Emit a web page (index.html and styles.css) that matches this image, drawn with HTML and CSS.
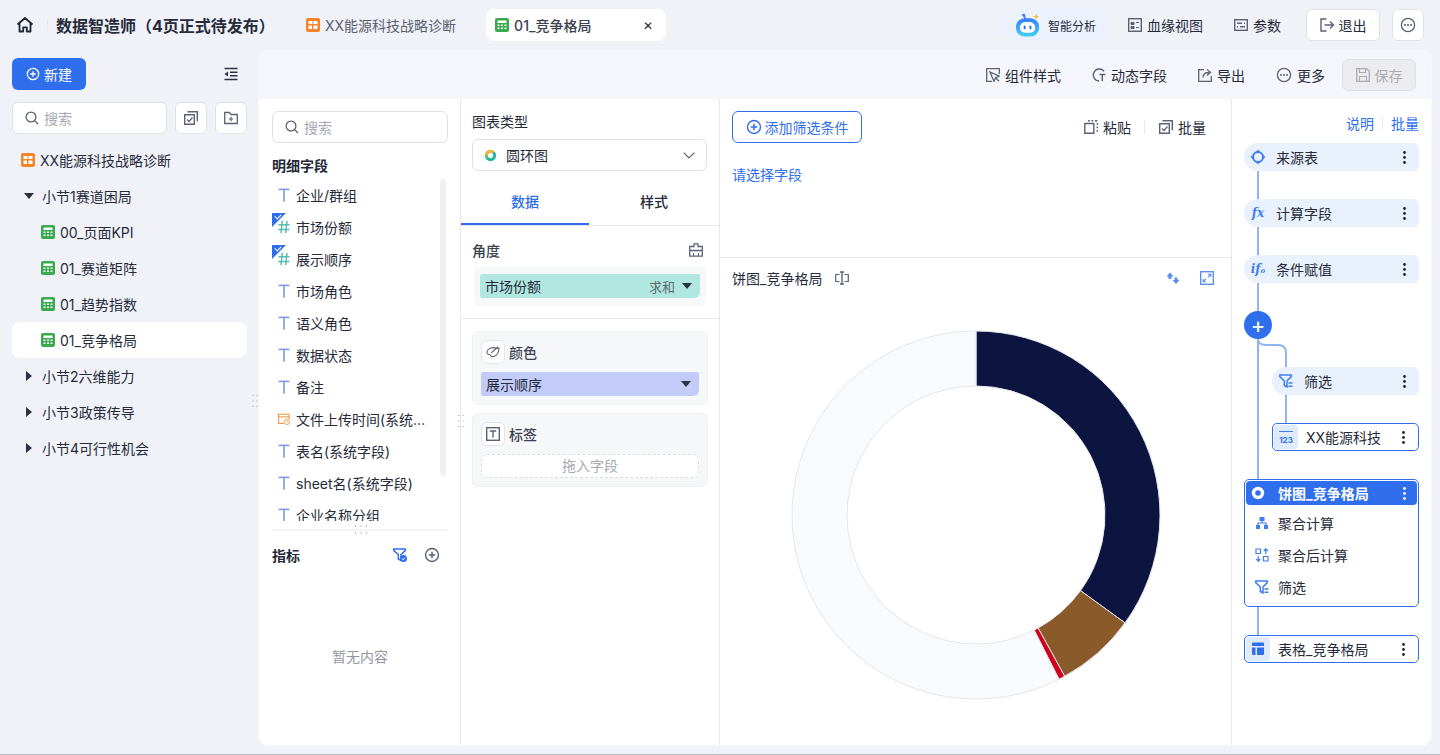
FILE: index.html
```html
<!DOCTYPE html>
<html lang="zh-CN">
<head>
  <meta charset="UTF-8" />
  <title>数据智造师</title>
  <link rel="stylesheet" href="styles.css">
</head>
<body>
  <!-- icon sprite -->
  <svg class="sprite" xmlns="http://www.w3.org/2000/svg">
    <symbol id="i-home" viewBox="0 0 18 18"><path d="M1.5 8.5 9 2l7.5 6.5M3.5 7v8.5h3.7v-4.2h3.6v4.2h3.700V7" fill="none" stroke="currentColor" stroke-width="1.8" stroke-linejoin="round"/></symbol>
    <symbol id="i-dash" viewBox="0 0 14 14"><rect width="14" height="14" rx="2" fill="#f5842a"/><path d="M2.500 3h9v3h-9zM2.500 7.500H6V11H2.500zM7.500 7.500h4V11h-4z" fill="#fff"/><path d="M7 3v3" stroke="#f5842a"/></symbol>
    <symbol id="i-table" viewBox="0 0 14 14"><rect width="14" height="14" rx="2" fill="#3aa94f"/><path d="M2.500 2.500h9v2.500h-9z" fill="#fff"/><path d="M2.500 6.500h2v1.500h-2zM6 6.500h2v1.500H6zM9.500 6.500h2v1.500h-2zM2.500 9.500h2V11h-2zM6 9.500h2V11H6zM9.500 9.500h2V11h-2z" fill="#fff"/></symbol>
    <symbol id="i-plus-circle" viewBox="0 0 16 16"><circle cx="8" cy="8" r="6.500" fill="none" stroke="currentColor" stroke-width="1.400"/><path d="M8 4.800v6.400M4.800 8h6.400" stroke="currentColor" stroke-width="1.500"/></symbol>
    <symbol id="i-outdent" viewBox="0 0 14 14"><path d="M.5 1.500h13M6 5.300h7.500M6 8.700h7.500M.5 12.500h13" stroke="currentColor" stroke-width="1.500"/><path d="M4 4.500v5L.5 7z" fill="currentColor"/></symbol>
    <symbol id="i-search" viewBox="0 0 14 14"><circle cx="6" cy="6" r="4.900" fill="none" stroke="currentColor" stroke-width="1.300"/><path d="m9.600 9.600 3.400 3.400" stroke="currentColor" stroke-width="1.300"/></symbol>
    <symbol id="i-batch" viewBox="0 0 14 14"><path d="M.7 3.700h9.600v9.600H.7z" fill="none" stroke="currentColor" stroke-width="1.400"/><path d="M3.500.7h9.800v9.600" fill="none" stroke="currentColor" stroke-width="1.400"/><path d="m3 8.500 2 2 3.500-4" fill="none" stroke="currentColor" stroke-width="1.200"/></symbol>
    <symbol id="i-folder-plus" viewBox="0 0 14 14"><path d="M.7 1.500h4.800l1.500 2h6.300v9H.7z" fill="none" stroke="currentColor" stroke-width="1.300"/><path d="M7 5.800v4.400M4.800 8h4.400" stroke="currentColor" stroke-width="1.200"/></symbol>
    <symbol id="i-t" viewBox="0 0 12 14"><path d="M.5 1.300h11M6 1.300V13.500" fill="none" stroke="currentColor" stroke-width="1.800"/></symbol>
    <symbol id="i-hash" viewBox="0 0 12 14"><path d="M4.300 1 3 13M9 1 7.700 13M.5 4.800h11M.3 9.500h11" fill="none" stroke="currentColor" stroke-width="1.500"/></symbol>
    <symbol id="i-cal" viewBox="0 0 14 14"><path d="M13 7V1.500H.7v10.800H7" fill="none" stroke="currentColor" stroke-width="1.200"/><path d="M.7 4.500H13" stroke="currentColor" stroke-width="1.200"/><circle cx="10.500" cy="10.500" r="3" fill="#fff" stroke="currentColor"/><path d="M10.500 9v1.700h1.300" fill="none" stroke="currentColor" stroke-width=".8"/></symbol>
    <symbol id="i-funnel" viewBox="0 0 14 14"><path d="M.8 1h11.400v1.600L8 7v6L5.300 11.500V7L.8 2.600z" fill="none" stroke="currentColor" stroke-width="1.500"/><path d="M9.500 9h4M9.500 12.200h4" stroke="currentColor" stroke-width="1.500"/></symbol>
    <symbol id="i-more" viewBox="0 0 3 13"><circle cx="1.500" cy="1.500" r="1.400" fill="currentColor"/><circle cx="1.500" cy="6.500" r="1.400" fill="currentColor"/><circle cx="1.500" cy="11.500" r="1.400" fill="currentColor"/></symbol>
    <symbol id="i-dots-circle" viewBox="0 0 16 16"><circle cx="8" cy="8" r="6.600" fill="none" stroke="currentColor" stroke-width="1.300"/><circle cx="5" cy="8" r="1" fill="currentColor"/><circle cx="8" cy="8" r="1" fill="currentColor"/><circle cx="11" cy="8" r="1" fill="currentColor"/></symbol>
    <symbol id="i-panel" viewBox="0 0 14 14"><rect x=".7" y=".7" width="12.600" height="12.600" fill="none" stroke="currentColor" stroke-width="1.400"/><path d="M3 4.500h3v2H3zM3 8.500h3v2H3zM8 4.500h3M8 9.500h3" fill="currentColor" stroke="currentColor"/></symbol>
    <symbol id="i-param" viewBox="0 0 14 14"><rect x=".7" y="1.700" width="12.600" height="10.600" fill="none" stroke="currentColor" stroke-width="1.400"/><path d="M3 5.200h5M10 5.200h1M3 8.800h1M6 8.800h5" stroke="currentColor" stroke-width="1.400"/></symbol>
    <symbol id="i-exit" viewBox="0 0 14 14"><path d="M6.500 1H1v12h5.500" fill="none" stroke="currentColor" stroke-width="1.400"/><path d="M4.500 7h9M10 3.500 13.500 7 10 10.500" fill="none" stroke="currentColor" stroke-width="1.400"/></symbol>
    <symbol id="i-style" viewBox="0 0 14 14"><path d="M13.300 6V.7H.7v12.600H6" fill="none" stroke="currentColor" stroke-width="1.300"/><path d="m4 4 4 9.500 1.500-3.800L13.300 8.200z" fill="none" stroke="currentColor" stroke-width="1.300"/><path d="m9.500 9.700 3.500 3.500" stroke="currentColor" stroke-width="1.300"/></symbol>
    <symbol id="i-dynamic" viewBox="0 0 14 14"><path d="M12 3.200A6 6 0 1 0 7 13" fill="none" stroke="currentColor" stroke-width="1.400"/><path d="M7.500 6.500h5.800M10.300 6.500V13" fill="none" stroke="currentColor" stroke-width="1.400"/></symbol>
    <symbol id="i-export" viewBox="0 0 14 14"><path d="M6 1.700H.7v11.600h12.600V8" fill="none" stroke="currentColor" stroke-width="1.300"/><path d="M5 9.500C5 6 7 4.500 11 4.500M9 1.500l3.500 3L9 7.500" fill="none" stroke="currentColor" stroke-width="1.300"/></symbol>
    <symbol id="i-save" viewBox="0 0 14 14"><path d="M.7.7h10l2.600 2.600v10H.7z" fill="none" stroke="currentColor" stroke-width="1.300"/><path d="M3.500 1v3.500h6V1M3.500 13V8.500h7V13" fill="none" stroke="currentColor" stroke-width="1.100"/></symbol>
    <symbol id="i-paste" viewBox="0 0 14 14"><path d="M.8 3.500h9v9.800h-9z" fill="none" stroke="currentColor" stroke-width="1.400"/><path d="M4 .8h1.800M7.500.8h1.800M11 .8h2.300M13.300 3v1.800M13.300 6.500v1.800M13.300 10v1.800" stroke="currentColor" stroke-width="1.400"/></symbol>
    <symbol id="i-cursor" viewBox="0 0 14 14"><path d="M5 1h4M5 13h4M7 1v12" stroke="currentColor" stroke-width="1.400"/><path d="M4.500 3.500H.7v7h3.800M9.500 3.500h3.800v7H9.500" fill="none" stroke="currentColor" stroke-width="1.200"/></symbol>
    <symbol id="i-swap" viewBox="0 0 14 14"><path d="M4 1 7.500 5h-2v2.500h-3V5h-2z" transform="translate(0 .5)" fill="currentColor"/><path d="M10 13 6.500 9h2V6.500h3V9h2z" fill="currentColor"/></symbol>
    <symbol id="i-expand" viewBox="0 0 14 14"><rect x=".7" y=".7" width="12.600" height="12.600" fill="none" stroke="currentColor" stroke-width="1.400"/><path d="M8 3.300h2.800v2.800M10.800 3.300 7.800 6.300M6 10.700H3.200V7.900M3.200 10.700l3-3" fill="none" stroke="currentColor" stroke-width="1.100"/></symbol>
    <symbol id="i-brush" viewBox="0 0 14 14"><path d="M5 3.500V.8h4v2.700h4.300v9.700H.7V3.500zM.7 7.500h12.600" fill="none" stroke="currentColor" stroke-width="1.300"/><path d="M4.500 13V10M9.500 13V10" stroke="currentColor" stroke-width="1"/></symbol>
    <symbol id="i-palette" viewBox="0 0 16 14"><path d="M8.500 2C4 2 1 4.500 1 7.500c0 2.500 2.500 2 3.500 2.500s.5 2.500 3 2.500c3.500 0 6-3 6.500-5.500l1-4z" fill="none" stroke="currentColor" stroke-width="1.200"/><path d="m6 8 8-7" stroke="currentColor" stroke-width="1.400"/></symbol>
    <symbol id="i-tbox" viewBox="0 0 14 14"><rect x=".7" y=".7" width="12.600" height="12.600" fill="none" stroke="currentColor" stroke-width="1.400"/><path d="M3.800 4h6.400M7 4v6.500" fill="none" stroke="currentColor" stroke-width="1.400"/></symbol>
    <symbol id="i-source" viewBox="0 0 16 16"><circle cx="8" cy="8" r="5" fill="none" stroke="currentColor" stroke-width="2"/><path d="M8 .5 10 3H6zM8 15.500 6 13h4zM.5 8 3 6v4zM15.500 8 13 10V6z" fill="currentColor"/></symbol>
    <symbol id="i-agg" viewBox="0 0 14 14"><path d="M4.500 1h5v4h-5zM1 9h4v4H1zM9 9h4v4H9z" fill="currentColor"/><path d="M7 5v2M3 9V7h8v2" fill="none" stroke="currentColor" stroke-width="1.200"/></symbol>
    <symbol id="i-after" viewBox="0 0 14 14"><path d="M1 1h4.500v4.500H1zM8.500 8.500H13V13H8.500z" fill="none" stroke="currentColor" stroke-width="1.200"/><path d="M3.300 8v5M1.300 11l2 2.200 2-2.200M10.800 6V1M8.800 3l2-2.200 2 2.200" fill="none" stroke="currentColor" stroke-width="1.200"/></symbol>
    <symbol id="i-grid" viewBox="0 0 14 14"><path d="M1 1.500a1 1 0 0 1 1-1h10a1 1 0 0 1 1 1V4H1zM1 5.500h3.500V13H2a1 1 0 0 1-1-1zM6 5.500h7V12a1 1 0 0 1-1 1H6z" fill="currentColor"/></symbol>
    <symbol id="i-ring" viewBox="0 0 14 14"><circle cx="7" cy="7" r="4.500" fill="none" stroke="currentColor" stroke-width="3.400"/></symbol>
    <symbol id="i-grip" viewBox="0 0 6 14"><path d="M1 1v1M5 1v1M1 6.500v1M5 6.500v1M1 12v1M5 12v1" stroke="currentColor" stroke-width="1.300"/></symbol>
    <symbol id="i-grip-h" viewBox="0 0 14 9"><path d="M1 1h1M6.500 1h1M12 1h1M1 8h1M6.500 8h1M12 8h1" stroke="currentColor" stroke-width="1.300"/></symbol>
  </svg>

  <div class="app">
    <header class="topbar">
      <svg class="icon-home"><use href="#i-home"/></svg>
      <span class="top-sep"></span>
      <h1 class="app-title">数据智造师（4页正式待发布）</h1>
      <div class="tab">
        <svg class="ic14"><use href="#i-dash"/></svg>
        <span>XX能源科技战略诊断</span>
      </div>
      <div class="tab tab-on">
        <svg class="ic14"><use href="#i-table"/></svg>
        <span>01_竞争格局</span>
        <span class="tab-close">✕</span>
      </div>

      <div class="top-right">
        <div class="ai-pill">
          <svg class="ai-bot" viewBox="0 0 28 26">
            <defs>
              <linearGradient id="botFill" x1="0" y1="0" x2="0" y2="1">
                <stop offset="0" stop-color="#3a7cf5"/>
                <stop offset="1" stop-color="#3fd0f7"/>
              </linearGradient>
            </defs>
            <path d="m11 7-2-4" stroke="#3a7cf5" stroke-width="1.600"/>
            <circle cx="9" cy="2.800" r="1.500" fill="#3a7cf5"/>
            <path d="m22 1 .9 2.300 2.300.9-2.300.9-.9 2.300-.9-2.300-2.300-.9 2.300-.9z" fill="#f9b93c"/>
            <rect x="1" y="6" width="24" height="19" rx="9" fill="url(#botFill)"/>
            <rect x="5" y="10" width="16" height="11" rx="5.500" fill="#fff"/>
            <rect x="9" y="13.500" width="2" height="4" rx="1" fill="#2a6fe8"/>
            <rect x="15" y="13.500" width="2" height="4" rx="1" fill="#2a6fe8"/>
          </svg>
          <span>智能分析</span>
        </div>
        <a class="top-link lineage"><svg class="ic14"><use href="#i-panel"/></svg>血缘视图</a>
        <a class="top-link params"><svg class="ic14"><use href="#i-param"/></svg>参数</a>
        <button class="btn-white btn-exit"><svg class="ic14"><use href="#i-exit"/></svg>退出</button>
        <button class="btn-white btn-square"><svg class="ic16"><use href="#i-dots-circle"/></svg></button>
      </div>
    </header>

    <div class="content">
      <aside class="sidebar">
        <div class="side-head">
          <button class="btn-new"><svg class="ic14"><use href="#i-plus-circle"/></svg>新建</button>
          <svg class="ic14 outdent"><use href="#i-outdent"/></svg>
        </div>
        <div class="side-search">
          <div class="search-box">
            <svg class="ic14"><use href="#i-search"/></svg>
            <span>搜索</span>
          </div>
          <button class="btn-white btn-square"><svg class="ic14"><use href="#i-batch"/></svg></button>
          <button class="btn-white btn-square"><svg class="ic14"><use href="#i-folder-plus"/></svg></button>
        </div>
        <ul class="tree">
          <li class="tree-row root"><svg class="ic14"><use href="#i-dash"/></svg>XX能源科技战略诊断</li>
          <li class="tree-row"><i class="caret caret-down"></i>小节1赛道困局</li>
          <li class="tree-row leaf"><svg class="ic14"><use href="#i-table"/></svg>00_页面KPI</li>
          <li class="tree-row leaf"><svg class="ic14"><use href="#i-table"/></svg>01_赛道矩阵</li>
          <li class="tree-row leaf"><svg class="ic14"><use href="#i-table"/></svg>01_趋势指数</li>
          <li class="tree-row leaf active"><svg class="ic14"><use href="#i-table"/></svg>01_竞争格局</li>
          <li class="tree-row"><i class="caret caret-right"></i>小节2六维能力</li>
          <li class="tree-row"><i class="caret caret-right"></i>小节3政策传导</li>
          <li class="tree-row"><i class="caret caret-right"></i>小节4可行性机会</li>
        </ul>
        <svg class="grip grip-side"><use href="#i-grip"/></svg>
      </aside>

      <main class="main">
        <div class="toolbar">
          <a class="tool"><svg class="ic14"><use href="#i-style"/></svg>组件样式</a>
          <a class="tool"><svg class="ic14"><use href="#i-dynamic"/></svg>动态字段</a>
          <a class="tool"><svg class="ic14"><use href="#i-export"/></svg>导出</a>
          <a class="tool"><svg class="ic16"><use href="#i-dots-circle"/></svg>更多</a>
          <button class="btn-save"><svg class="ic14"><use href="#i-save"/></svg>保存</button>
        </div>

        <div class="columns">
          <section class="col-fields">
            <div class="search-box">
              <svg class="ic14"><use href="#i-search"/></svg>
              <span>搜索</span>
            </div>
            <h3 class="fields-title">明细字段</h3>
            <div class="field-list">
              <div class="field"><svg class="field-ic c-t"><use href="#i-t"/></svg><span>企业/群组</span></div>
              <div class="field"><i class="checked"></i><svg class="field-ic c-hash"><use href="#i-hash"/></svg><span>市场份额</span></div>
              <div class="field"><i class="checked"></i><svg class="field-ic c-hash"><use href="#i-hash"/></svg><span>展示顺序</span></div>
              <div class="field"><svg class="field-ic c-t"><use href="#i-t"/></svg><span>市场角色</span></div>
              <div class="field"><svg class="field-ic c-t"><use href="#i-t"/></svg><span>语义角色</span></div>
              <div class="field"><svg class="field-ic c-t"><use href="#i-t"/></svg><span>数据状态</span></div>
              <div class="field"><svg class="field-ic c-t"><use href="#i-t"/></svg><span>备注</span></div>
              <div class="field"><svg class="field-ic cal"><use href="#i-cal"/></svg><span>文件上传时间(系统字段)</span></div>
              <div class="field"><svg class="field-ic c-t"><use href="#i-t"/></svg><span>表名(系统字段)</span></div>
              <div class="field"><svg class="field-ic c-t"><use href="#i-t"/></svg><span>sheet名(系统字段)</span></div>
              <div class="field"><svg class="field-ic c-t"><use href="#i-t"/></svg><span>企业名称分组</span></div>
              <i class="scroll-thumb"></i>
            </div>
            <div class="split">
              <svg class="grip-h"><use href="#i-grip-h"/></svg>
            </div>
            <div class="metric-head">
              <h3>指标</h3>
              <svg class="ic14 funnel-check" viewBox="0 0 14 14">
                <path d="M.8 1h11.400v1.600L8 6.500v6L5.300 11V6.500L.8 2.600z" fill="none" stroke="currentColor" stroke-width="1.500"/>
                <circle cx="10.500" cy="10.500" r="3.500" fill="currentColor"/>
                <path d="m8.800 10.500 1.300 1.300 2-2.300" fill="none" stroke="#fff"/>
              </svg>
              <svg class="ic16"><use href="#i-plus-circle"/></svg>
            </div>
            <div class="metric-empty">暂无内容</div>
          </section>

          <section class="col-config">
            <div class="chart-type">
              <label>图表类型</label>
              <div class="select">
                <svg class="ring-ic" viewBox="0 0 14 14">
                  <circle cx="7" cy="7" r="4.500" fill="none" stroke="#17b4a0" stroke-width="3"/>
                  <path d="M2.500 7A4.500 4.500 0 0 1 10.200 3.800" fill="none" stroke="#f7b23b" stroke-width="3"/>
                  <path d="M2.500 7a4.500 4.500 0 0 0 1.300 3.200" fill="none" stroke="#5cc76b" stroke-width="3"/>
                </svg>
                <span>圆环图</span>
                <svg class="chev" viewBox="0 0 12 7"><path d="m.7.700 5.300 5.300L11.300.7" fill="none" stroke="currentColor" stroke-width="1.200"/></svg>
              </div>
            </div>
            <div class="tabs">
              <div class="cfg-tab cfg-tab-on">数据</div>
              <div class="cfg-tab">样式</div>
            </div>
            <div class="angle">
              <div class="angle-head">
                <b>角度</b>
                <svg class="ic14"><use href="#i-brush"/></svg>
              </div>
              <div class="angle-box">
                <div class="pill pill-green">
                  <span>市场份额</span>
                  <em>求和</em>
                  <i class="caret caret-down"></i>
                </div>
              </div>
            </div>
            <div class="cards">
              <div class="card">
                <div class="card-head">
                  <span class="card-ic"><svg class="ic14"><use href="#i-palette"/></svg></span>
                  <b>颜色</b>
                </div>
                <div class="pill pill-violet">
                  <span>展示顺序</span>
                  <i class="caret caret-down"></i>
                </div>
              </div>
              <div class="card">
                <div class="card-head">
                  <span class="card-ic"><svg class="ic14"><use href="#i-tbox"/></svg></span>
                  <b>标签</b>
                </div>
                <div class="drop">拖入字段</div>
              </div>
              <svg class="grip grip-cfg"><use href="#i-grip"/></svg>
            </div>
          </section>

          <section class="col-chart">
            <div class="filter-pane">
              <div class="filter-row">
                <button class="btn-add"><svg class="ic16"><use href="#i-plus-circle"/></svg>添加筛选条件</button>
                <div class="filter-tools">
                  <a class="tool"><svg class="ic14"><use href="#i-paste"/></svg>粘贴</a>
                  <span class="vsep"></span>
                  <a class="tool"><svg class="ic14"><use href="#i-batch"/></svg>批量</a>
                </div>
              </div>
              <p class="filter-hint">请选择字段</p>
            </div>
            <div class="chart-head">
              <span>饼图_竞争格局</span>
              <svg class="ic14 cursor"><use href="#i-cursor"/></svg>
              <svg class="ic14 swap"><use href="#i-swap"/></svg>
              <svg class="ic14 expand"><use href="#i-expand"/></svg>
            </div>
            <div class="chart-body">
              <svg class="donut" viewBox="0 0 370 370">
                <path class="slice" fill="#0c1440" d="M185 1A184 184 0 0 1 334.040 292.900L289.490 260.650A129 129 0 0 0 185 56Z"/>
                <path class="slice" fill="#8b5a2b" d="M334.040 292.900A184 184 0 0 1 273.650 346.240L247.150 298.040A129 129 0 0 0 289.490 260.650Z"/>
                <path class="slice" fill="#d0021b" d="M273.650 346.240A184 184 0 0 1 267.970 349.240L243.170 300.150A129 129 0 0 0 247.150 298.040Z"/>
                <path class="slice" fill="#f9fafe" d="M267.970 349.240A184 184 0 1 1 185 1L185 56A129 129 0 1 0 243.170 300.150Z"/>
              </svg>
            </div>
          </section>

          <section class="col-flow">
            <div class="flow-links">
              <a>说明</a>
              <span class="vsep"></span>
              <a>批量</a>
            </div>
            <div class="flow">
              <svg class="wires" viewBox="0 0 175 520">
                <path d="M14 28V336M14 464V492M14 196Q14 202 22 202H34Q42 202 42 210V224M42 252V280" fill="none" stroke="#8fb4f5" stroke-width="2"/>
              </svg>
              <div class="node"><svg class="ic16"><use href="#i-source"/></svg><span>来源表</span><svg class="more"><use href="#i-more"/></svg></div>
              <div class="node"><em class="fx">fx</em><span>计算字段</span><svg class="more"><use href="#i-more"/></svg></div>
              <div class="node"><em class="fx">if<small>o</small></em><span>条件赋值</span><svg class="more"><use href="#i-more"/></svg></div>
              <div class="add-row"><button class="btn-round">+</button></div>
              <div class="node node-sub"><svg class="ic14 node-ic"><use href="#i-funnel"/></svg><span>筛选</span><svg class="more"><use href="#i-more"/></svg></div>
              <div class="node-box node-sub">
                <span class="box-ic num">123</span>
                <span>XX能源科技</span>
                <svg class="more"><use href="#i-more"/></svg>
              </div>
              <div class="pie-card">
                <div class="pie-head">
                  <span class="pie-ic"><svg class="ic14"><use href="#i-ring"/></svg></span>
                  <b>饼图_竞争格局</b>
                  <svg class="more"><use href="#i-more"/></svg>
                </div>
                <div class="pie-row"><svg class="ic14"><use href="#i-agg"/></svg>聚合计算</div>
                <div class="pie-row"><svg class="ic14"><use href="#i-after"/></svg>聚合后计算</div>
                <div class="pie-row"><svg class="ic14"><use href="#i-funnel"/></svg>筛选</div>
              </div>
              <div class="node-box">
                <span class="box-ic"><svg class="ic14"><use href="#i-grid"/></svg></span>
                <span>表格_竞争格局</span>
                <svg class="more"><use href="#i-more"/></svg>
              </div>
            </div>
          </section>
        </div>
      </main>
    </div>
  </div>
</body>
</html>
```

FILE: styles.css
```css
:root {
  --primary: #2f6fed;
  --text: #252b3a;
  --icon: #5b6273;
  --line: #e6e8ec;
  --node: #e9f1fd;
}

* {
  box-sizing: border-box;
}

html, body {
  margin: 0;
  height: 755px;
  overflow: hidden;
}

body {
  font-family: Inter, 'Noto Sans CJK SC', sans-serif;
  font-size: 14px;
  color: var(--text);
  background: #f0f2f8;
}

button {
  font: inherit;
  color: inherit;
  cursor: pointer;
}

h1, h3, p, ul {
  margin: 0;
  padding: 0;
}

svg {
  flex: none;
  display: block;
}

em {
  font-style: normal;
}

.sprite {
  position: absolute;
  width: 0;
  height: 0;
}

.ic14 { width: 14px; height: 14px; }
.ic16 { width: 16px; height: 16px; }

.app {
  height: 755px;
  border-bottom: 1px solid #b3b7bf;
}

/* top bar */
.topbar {
  height: 50px;
  display: flex;
  align-items: center;
  padding-left: 16px;
}

.icon-home {
  width: 18px;
  height: 18px;
  color: #1f2733;
}

.top-sep {
  width: 1px;
  height: 12px;
  margin: 0 8px 0 13px;
  background: #e6e8ee;
}

.app-title {
  width: 240px;
  font-size: 16px;
  font-weight: 700;
  white-space: nowrap;
}

.tab {
  display: flex;
  align-items: center;
  gap: 5px;
  color: #5a6070;
  margin-left: 10px;
  height: 32px;
}

.tab-on {
  width: 180px;
  margin-left: 30px;
  padding-left: 9px;
  background: #fff;
  border-radius: 8px;
  font-weight: 500;
  color: #3b4150;
}

.tab-close {
  margin-left: auto;
  margin-right: 13px;
  font-size: 12px;
  color: #1f2733;
}

.top-right {
  margin-left: auto;
  display: flex;
  align-items: center;
  padding-right: 16px;
}

.ai-pill {
  width: 110px;
  height: 32px;
  display: flex;
  align-items: center;
  gap: 6px;
  padding-left: 15px;
  font-size: 12px;
  background: #ebf2fd;
  border-radius: 16px;
  margin-right: 18px;
}

.ai-bot {
  width: 27px;
  height: 26px;
}

.top-link {
  display: flex;
  align-items: center;
  gap: 5px;
}

.top-link svg { color: var(--icon); }
.lineage { margin-right: 31px; }
.params { margin-right: 25px; }

.btn-white {
  height: 32px;
  display: flex;
  align-items: center;
  justify-content: center;
  gap: 5px;
  background: #fff;
  border: 1px solid #e0e3ea;
  border-radius: 6px;
}

.btn-white svg { color: var(--icon); }
.btn-exit { width: 74px; margin-right: 12px; }
.btn-square { width: 32px; padding: 0; }

/* layout */
.content {
  display: flex;
  height: 696px;
}

.sidebar {
  position: relative;
  width: 258px;
  flex: none;
  padding: 8px 11px 0 12px;
}

.side-head {
  display: flex;
  align-items: center;
  justify-content: space-between;
  padding-right: 9px;
}

.btn-new {
  width: 74px;
  height: 32px;
  display: flex;
  align-items: center;
  justify-content: center;
  gap: 4px;
  background: var(--primary);
  color: #fff;
  border: none;
  border-radius: 6px;
  font-size: 14px;
}

.outdent { color: #2b3240; }

.side-search {
  display: flex;
  gap: 8px;
  margin-top: 12px;
}

.side-search .search-box {
  width: 155px;
}

.search-box {
  height: 32px;
  display: flex;
  align-items: center;
  gap: 5px;
  padding-left: 12px;
  background: #fff;
  border: 1px solid #dfe2e9;
  border-radius: 6px;
  color: #a5a9b3;
}

.search-box svg { color: var(--icon); }

.tree {
  list-style: none;
  margin-top: 8px;
}

.tree-row {
  height: 36px;
  display: flex;
  align-items: center;
  gap: 8px;
  padding-left: 12px;
  border-radius: 8px;
}

.tree-row.root { gap: 5px; padding-left: 9px; }
.tree-row.leaf { gap: 5px; padding-left: 29px; }
.tree-row.active { background: #fff; }

.caret {
  display: block;
  flex: none;
  width: 0;
  height: 0;
}

.caret-down {
  border-left: 5px solid transparent;
  border-right: 5px solid transparent;
  border-top: 6px solid #2b3240;
}

.caret-right {
  border-top: 5px solid transparent;
  border-bottom: 5px solid transparent;
  border-left: 6px solid #2b3240;
  margin-left: 2px;
  margin-right: 2px;
}

.grip {
  position: absolute;
  width: 6px;
  height: 14px;
  color: #aeb2ba;
}

.grip-side { right: 0; top: 344px; }

.main {
  width: 1174px;
  flex: none;
  display: flex;
  flex-direction: column;
  background: #fff;
  border: 1px solid #f7f8fc;
  border-radius: 10px;
  overflow: hidden;
}

.toolbar {
  height: 48px;
  flex: none;
  display: flex;
  align-items: center;
  justify-content: flex-end;
  gap: 31px;
  padding-right: 15px;
  background: #f5f6fb;
}

.tool {
  display: flex;
  align-items: center;
  gap: 5px;
}

.tool svg { color: var(--icon); }

.btn-save {
  width: 74px;
  height: 32px;
  margin-left: -14px;
  display: flex;
  align-items: center;
  justify-content: center;
  gap: 5px;
  color: #a8acb5;
  background: #ececef;
  border: 1px solid #dfe1e6;
  border-radius: 6px;
}

.columns {
  flex: 1;
  display: flex;
  min-height: 0;
}

/* fields column */
.col-fields {
  width: 202px;
  flex: none;
  display: flex;
  flex-direction: column;
  padding: 12px 12px 0 13px;
  border-right: 1px solid var(--line);
}

.fields-title {
  height: 22px;
  line-height: 22px;
  margin-top: 12px;
  margin-bottom: 2px;
  font-size: 14px;
  font-weight: 700;
}

.field-list {
  position: relative;
  height: 342px;
  flex: none;
  overflow: hidden;
}

.field {
  position: relative;
  height: 32px;
  display: flex;
  align-items: center;
  gap: 6px;
  padding: 0 20px 0 6px;
}

.field span {
  overflow: hidden;
  white-space: nowrap;
  text-overflow: ellipsis;
}

.field-ic {
  width: 12px;
  height: 14px;
}

.c-t { color: #86a3e0; }
.c-hash { color: #55bfae; }
.cal { color: #f5923e; }

.checked {
  position: absolute;
  left: 0;
  top: 2px;
  width: 14px;
  height: 14px;
  background: var(--primary);
  clip-path: polygon(0 0, 100% 0, 0 100%);
}

.checked::after {
  content: "";
  position: absolute;
  left: 3px;
  top: 1px;
  width: 5px;
  height: 3px;
  border-left: 1px solid #fff;
  border-bottom: 1px solid #fff;
  transform: rotate(-45deg);
}

.scroll-thumb {
  position: absolute;
  right: 2px;
  top: 0;
  width: 6px;
  height: 297px;
  background: #eef0f3;
  border-radius: 3px;
}

.split {
  position: relative;
  height: 2px;
  flex: none;
  margin-top: 8px;
  background: #f2f3f5;
}

.grip-h {
  position: absolute;
  left: 82px;
  top: -4px;
  width: 14px;
  height: 9px;
  color: #a5a9b1;
}

.metric-head {
  display: flex;
  align-items: center;
  margin-top: 14px;
  height: 20px;
}

.metric-head h3 {
  flex: 1;
  font-size: 14px;
  font-weight: 700;
}

.funnel-check { color: var(--primary); margin-right: 17px; }
.metric-head .ic16 { color: var(--icon); margin-right: 8px; }

.metric-empty {
  margin-top: 81px;
  text-align: center;
  line-height: 22px;
  color: #93979f;
}

/* config column */
.col-config {
  width: 259px;
  flex: none;
  border-right: 1px solid var(--line);
}

.chart-type {
  padding: 12px 12px 0 11px;
}

.chart-type label {
  display: block;
  line-height: 22px;
  margin-bottom: 6px;
}

.select {
  height: 32px;
  display: flex;
  align-items: center;
  gap: 9px;
  padding: 0 11px;
  border: 1px solid #dfe2e9;
  border-radius: 6px;
}

.ring-ic { width: 13px; height: 13px; }

.chev {
  width: 12px;
  height: 7px;
  margin-left: auto;
  color: #5b6273;
}

.tabs {
  display: flex;
  height: 45px;
  margin-top: 10px;
  border-bottom: 1px solid var(--line);
}

.cfg-tab {
  width: 128px;
  height: 44px;
  line-height: 42px;
  text-align: center;
  font-weight: 500;
}

.cfg-tab + .cfg-tab { flex: 1; }

.cfg-tab-on {
  color: var(--primary);
  border-bottom: 2px solid var(--primary);
}

.angle {
  padding: 14px 13px 12px;
  border-bottom: 1px solid var(--line);
}

.angle-head {
  display: flex;
  justify-content: space-between;
  align-items: center;
  height: 20px;
  margin-left: -2px;
  padding-right: 3px;
  margin-bottom: 6px;
}

.angle-head b { font-weight: 500; color: #3b4150; }
.angle-head svg { color: var(--icon); }

.angle-box {
  padding: 8px 6px;
  background: #f7f8fa;
  border-radius: 6px;
}

.pill {
  height: 24px;
  display: flex;
  align-items: center;
  padding: 0 8px 0 5px;
  border-radius: 2px 2px 6px 2px;
}

.pill em {
  margin-left: auto;
  margin-right: 7px;
  font-size: 13px;
  color: #5f6b6a;
}

.pill-green { background: #b0e7e0; }

.pill-violet {
  background: #c3cbf8;
  justify-content: space-between;
}

.cards {
  position: relative;
  display: flex;
  flex-direction: column;
  gap: 8px;
  padding: 12px 11px;
}

.card {
  display: flex;
  flex-direction: column;
  gap: 8px;
  padding: 8px;
  background: #f6f7f9;
  border: 1px solid #f0f1f4;
  border-radius: 6px;
}

.card-head {
  display: flex;
  align-items: center;
  gap: 4px;
}

.card-head b { font-weight: 500; color: #3b4150; }

.card-ic {
  width: 24px;
  height: 24px;
  display: flex;
  align-items: center;
  justify-content: center;
  background: #fff;
  border: 1px solid #e2e4ea;
  border-radius: 6px;
  color: var(--icon);
}

.drop {
  height: 24px;
  line-height: 22px;
  text-align: center;
  background: #fff;
  border: 1px dashed #dadde3;
  border-radius: 6px;
  color: #a5a9b1;
}

.grip-cfg { left: -3px; top: 95px; }

/* chart column */
.col-chart {
  width: 512px;
  flex: none;
  border-right: 1px solid var(--line);
}

.filter-pane {
  height: 159px;
  padding: 12px 25px 0 12px;
  border-bottom: 1px solid var(--line);
}

.filter-row {
  display: flex;
  align-items: center;
  justify-content: space-between;
}

.btn-add {
  width: 130px;
  height: 32px;
  display: flex;
  align-items: center;
  justify-content: center;
  gap: 3px;
  padding: 0;
  color: var(--primary);
  background: #fff;
  border: 1px solid var(--primary);
  border-radius: 6px;
}

.filter-tools {
  display: flex;
  align-items: center;
}

.vsep {
  width: 1px;
  height: 14px;
  background: var(--line);
  margin: 0 14px 0 13px;
}

.filter-hint {
  margin-top: 21px;
  line-height: 22px;
  color: var(--primary);
}

.chart-head {
  height: 40px;
  display: flex;
  align-items: center;
  padding: 0 17px 0 12px;
}

.cursor { margin-left: 13px; color: var(--icon); }
.swap { margin-left: auto; color: #5b8ef0; }
.expand { margin-left: 20px; color: #5b8ef0; }

.chart-body {
  display: flex;
  justify-content: center;
  padding-top: 32px;
}

.donut {
  width: 370px;
  height: 370px;
}

.slice {
  stroke: #e4e6eb;
  stroke-width: 1;
}

/* flow column */
.col-flow {
  flex: 1;
  padding: 13px 12px 0;
}

.flow-links {
  display: flex;
  align-items: center;
  justify-content: flex-end;
  height: 22px;
  margin-bottom: 9px;
  color: var(--primary);
}

.flow-links .vsep {
  margin: 0 8px;
}

.flow {
  position: relative;
  display: flex;
  flex-direction: column;
  gap: 28px;
}

.wires {
  position: absolute;
  left: 0;
  top: 0;
  width: 175px;
  height: 520px;
}

.node, .node-box, .pie-card, .add-row {
  position: relative;
}

.node {
  height: 28px;
  display: flex;
  align-items: center;
  gap: 10px;
  padding-left: 6px;
  background: var(--node);
  border-radius: 14px 6px 6px 14px;
}

.node > svg:first-child { color: #3f7df0; }
.node-ic { margin-left: 1px; margin-right: 1px; }

.fx {
  width: 16px;
  text-align: center;
  font-family: 'DejaVu Serif', serif;
  font-style: italic;
  font-size: 12px;
  font-weight: 700;
  color: #3f7df0;
  white-space: nowrap;
}

.fx small {
  font-size: 7px;
}

.more {
  width: 3px;
  height: 13px;
  margin-left: auto;
  margin-right: 13px;
  color: #1f2733;
}

.node-sub {
  margin-left: 28px;
}

.add-row {
  height: 28px;
}

.btn-round {
  width: 28px;
  height: 28px;
  display: block;
  padding: 0;
  border: none;
  border-radius: 50%;
  background: var(--primary);
  color: #fff;
  font-size: 22px;
  line-height: 26px;
  text-align: center;
}

.node-box {
  height: 28px;
  display: flex;
  align-items: center;
  gap: 8px;
  padding-left: 1px;
  background: #fff;
  border: 1px solid var(--primary);
  border-radius: 5px;
}

.box-ic {
  width: 24px;
  height: 24px;
  display: flex;
  align-items: center;
  justify-content: center;
  background: #dfeafc;
  border-radius: 4px;
  color: var(--primary);
}

.num {
  font-size: 8px;
  font-weight: 700;
  border-top: 0;
  background-image: linear-gradient(#3f7df0, #3f7df0);
  background-size: 14px 1px;
  background-position: center 6px;
  background-repeat: no-repeat;
  padding-top: 5px;
}

.pie-card {
  padding: 1px 1px 3px;
  background: #fff;
  border: 1px solid var(--primary);
  border-radius: 5px;
}

.pie-head {
  height: 24px;
  display: flex;
  align-items: center;
  gap: 8px;
  margin-bottom: 2px;
  color: #fff;
  background: var(--primary);
  border-radius: 4px;
}

.pie-head b { font-weight: 700; }
.pie-head .more { color: #fff; margin-right: 11px; }

.pie-ic {
  width: 24px;
  display: flex;
  justify-content: center;
}

.pie-row {
  height: 32px;
  display: flex;
  align-items: center;
  gap: 9px;
  padding-left: 9px;
}

.pie-row svg { color: #3f7df0; }
```
